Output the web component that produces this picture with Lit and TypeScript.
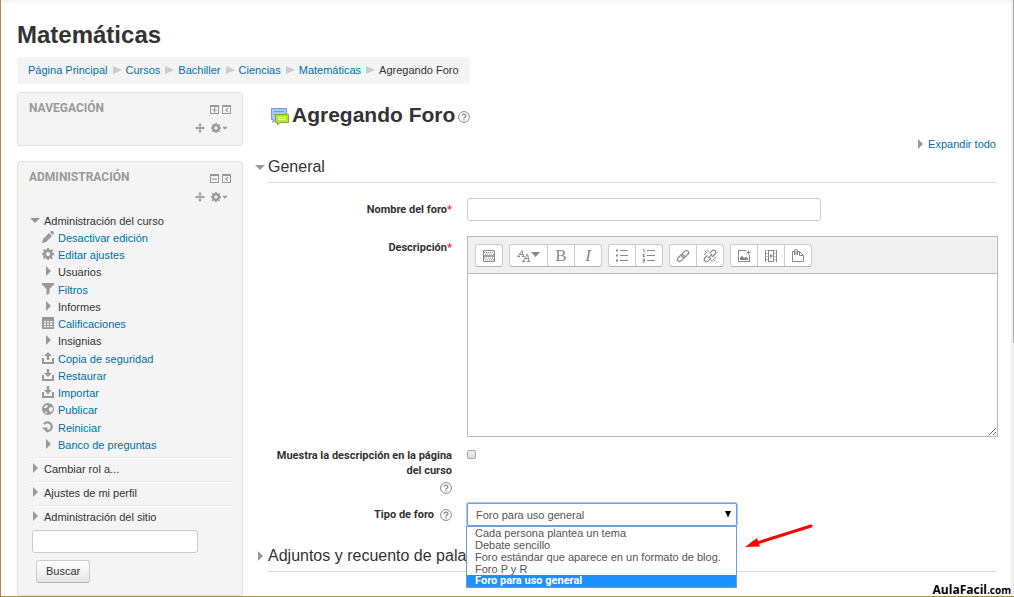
import { LitElement, html, css, svg } from "lit";
import { customElement, property, state } from "lit/decorators.js";

const ICONS: Record<string, unknown> = {
  expanded: svg`<path d="M1 4h10L6 9z"/>`,
  collapsed: svg`<path d="M4 1v10l5-5z"/>`,
  pencil: svg`<path d="M0 12l1-4 6-6 3 3-6 6zM8 1l1-1q1-.5 2 .5l.5.5q1 1 0 2l-1 1z"/>`,
  gear: svg`<path fill-rule="evenodd" d="M5 0h2l.4 1.7 1 .4L10 1.1 11.200 2.400 10 3.800l.4 1L12 5v2l-1.700.4-.4 1 1 1.500-1.300 1.300-1.500-1-1 .4L7 12H5l-.4-1.500-1-.4-1.500 1L.8 9.800l1-1.500-.4-1L0 7V5l1.500-.3.4-1L1 2.200 2.300.9l1.500 1 1-.4zM6 4a2 2 0 1 0 0 4 2 2 0 0 0 0-4z"/>`,
  filter: svg`<path d="M0 0h12v1.500L7.500 6v4.500L4.500 12V6L0 1.500z"/>`,
  grades: svg`<path fill-rule="evenodd" d="M0 0h12v12H0zM2 4v1.500h2V4zM5 4v1.500h2V4zM8 4v1.500h2.500V4zM2 6.500v1.500h2V6.500zM5 6.500v1.500h2V6.500zM8 6.500v1.500h2.500V6.500zM2 9v1.200h2V9zM5 9v1.200h2V9zM8 9v1.200h2.500V9z"/>`,
  upload: svg`<path d="M6 0l4 4H7.200v4H4.800V4H2zM0 6h2v4h8V6h2v6H0z"/>`,
  download: svg`<path d="M6 8L2 4h2.800V0h2.400v4H10zM0 6h2v4h8V6h2v6H0z"/>`,
  globe: svg`<path fill-rule="evenodd" d="M6 0a6 6 0 1 0 0 12A6 6 0 0 0 6 0zM1.500 5L4 2l2 .4-.5 1.500-1.500 1zM7.500 4.500l3-.5.5 2.500L9 9.500 8 8.500 6.500 6.500zM3 8l2 1v1.800L3.500 10z"/>`,
  reset: svg`<path d="M2 3.200A4.300 4.300 0 1 1 6 10H4" fill="none" stroke="currentColor" stroke-width="2.200"/><path d="M0 6.500h5.500V12z"/>`,
  move: svg`<path d="M6 0l2.200 2.800H6.800v2.400h2.400V3.800L12 6 9.200 8.200V6.800H6.800v2.400h1.400L6 12 3.800 9.200h1.400V6.800H2.800v1.400L0 6l2.800-2.200v1.400h2.400V2.800H3.800z"/>`,
  plus: svg`<path fill-rule="evenodd" d="M2 2h9v9H2zM3 4v6h7V4zM6 4.500h1.200v1.900H9v1.200H7.200V9.500H6V7.600H4V6.400h2z"/>`,
  minus: svg`<path fill-rule="evenodd" d="M2 2h9v9H2zM3 4v6h7V4zM4 6.500h5v1.200H4z"/>`,
  dock: svg`<path fill-rule="evenodd" d="M2 2h9v9H2zM3 4v6h7V4zM8 4.500V6L6.800 7 8 8v1.500L5 7z"/>`,
  help: svg`<circle cx="6" cy="6" r="5.400" fill="none" stroke="currentColor" stroke-width="1"/><path d="M4.100 4.700a1.900 1.600 0 1 1 2.700 1.400Q6 6.500 6 7.400" fill="none" stroke="currentColor" stroke-width="1.300"/><path d="M5.300 8.200h1.400v1.400H5.300z"/>`,
  caret: svg`<path d="M2 4h8L6 8.500z"/>`,
};

const icon = (name: string, size = 12) =>
  html`<svg width=${size} height=${size} viewBox="0 0 12 12" fill="currentColor" aria-hidden="true">${ICONS[name]}</svg>`;

const stroke = (body: unknown) =>
  html`<svg width="14" height="14" viewBox="0 0 14 14" fill="none" stroke="currentColor" aria-hidden="true">${body}</svg>`;

const TOOLBAR = [
  [{ label: "Mostrar más botones", art: stroke(svg`<path d="M1.500 1.500h11v11h-11z"/><path d="M1 7h12" stroke-width="1.500"/><path d="M2 3.500h10M3 5.200h10M2 9h10M3 10.800h10" stroke-dasharray="1 1"/>`) }],
  [
    { label: "Estilos", wide: true, art: html`<svg width="24" height="14" viewBox="0 0 24 14" fill="none" stroke="currentColor" aria-hidden="true"><path d="M1 7.500L5 1.500l1.500 6M2.500 5.500H6M.5 7.500H3M5 7.500h2.500M6 12l4.500-7 1.500 7M7.500 9.500H11.500M5 12.500h3M10 12.500h3"/><path d="M14 3h9l-4.500 5z" fill="currentColor" stroke="none"/></svg>` },
    { label: "Negrita", art: html`<b class="glyph">B</b>` },
    { label: "Cursiva", art: html`<i class="glyph">I</i>` },
  ],
  [
    { label: "Lista sin numerar", art: stroke(svg`<path d="M5 1.500h8M5 6.500h8M5 11.500h8"/><path d="M1 1.500h2M1 6.500h2M1 11.500h2" stroke-width="2"/>`) },
    { label: "Lista numerada", art: stroke(svg`<path d="M5 1.500h8M5 6.500h8M5 11.500h8"/><path d="M1 .5h1v3M.5 5.500h2l-1.500 2h2M.5 10h2v3h-2M1 11.500h1"/>`) },
  ],
  [
    { label: "Enlace", art: stroke(svg`<g transform="rotate(-45 7 7)" stroke-width="1.200"><rect x="0" y="4.800" width="8" height="4.400" rx="2.200"/><rect x="6" y="4.800" width="8" height="4.400" rx="2.200"/></g>`) },
    { label: "Quitar enlace", art: stroke(svg`<g transform="rotate(-45 7 7)" stroke-width="1.200"><path d="M5.500 4.800H2a2.200 2.200 0 0 0 0 4.400H5.500L6 7H4M8.500 4.800H12a2.200 2.200 0 0 1 0 4.400H8.500L8 7h2"/></g><path d="M2 2l2 2M5 1v2M1 5h2M12 12l-2-2M9 13v-2M13 9h-2"/>`) },
  ],
  [
    { label: "Imagen", art: stroke(svg`<path d="M1.500 1v11.500h11V6M1 1.500h8"/><path d="M3 11V9l2-2.500L7 9l2-1.500 2 2V11z" fill="currentColor" stroke="none"/><path d="M9.500 3.500h4M11.500 1.500v4"/>`) },
    { label: "Multimedia", art: stroke(svg`<path d="M1.500 1v12M4.500 1v12M9.500 1v12M12.500 1v12M4 1.500h6M4 12.500h6"/><path d="M3 1v12M11 1v12" stroke-dasharray="1 2"/><path d="M6 5l3 2-3 2z" fill="currentColor" stroke="none"/>`) },
    { label: "Archivos", art: stroke(svg`<path d="M3 2.500H1.500v10h11v-6l-4-4H7M8.500 2.500v4h4"/><path d="M3.500 6V2a1.500 1.500 0 0 1 3 0V6M5 2v4"/>`) },
  ],
];

const COURSE_ADMIN = [
  { icon: "pencil", text: "Desactivar edición" },
  { icon: "gear", text: "Editar ajustes" },
  { icon: "collapsed", text: "Usuarios", branch: true },
  { icon: "filter", text: "Filtros" },
  { icon: "collapsed", text: "Informes", branch: true },
  { icon: "grades", text: "Calificaciones" },
  { icon: "collapsed", text: "Insignias", branch: true },
  { icon: "upload", text: "Copia de seguridad" },
  { icon: "download", text: "Restaurar" },
  { icon: "download", text: "Importar" },
  { icon: "globe", text: "Publicar" },
  { icon: "reset", text: "Reiniciar" },
  { icon: "collapsed", text: "Banco de preguntas" },
];

const BRANCHES = ["Cambiar rol a...", "Ajustes de mi perfil", "Administración del sitio"];

const base = css`
  * { box-sizing: border-box; }
  a { color: #0070a8; text-decoration: none; }
  ul, ol { list-style: none; margin: 0; padding: 0; }
  svg { display: block; flex: none; }
  button { font: inherit; color: inherit; cursor: pointer; }
  .plain { border: 0; background: none; padding: 0; display: inline-flex; align-items: center; }
`;

@customElement("side-block")
class SideBlock extends LitElement {
  @property() heading = "";
  @property({ type: Boolean }) open = false;

  static styles = [base, css`
    :host { display: block; background: #f4f4f4; border: 1px solid #e2e2e2; border-radius: 3px; padding: 7px 10px 12px 11px; }
    .head { display: flex; justify-content: space-between; align-items: flex-start; }
    h2 { margin: 0; font-family: Roboto, "Liberation Sans", sans-serif; font-size: 12px; line-height: 16px; color: #999; text-transform: uppercase; }
    .tools { color: #999; display: grid; justify-items: end; row-gap: 8px; padding-top: 3px; }
    .pair { display: flex; }
    .edit { display: flex; gap: 6px; padding-right: 3px; }
  `];

  render() {
    return html`
      <div class="head">
        <h2>${this.heading}</h2>
        <div class="tools">
          <div class="pair">
            <button class="plain" aria-label="Mostrar u ocultar">${icon(this.open ? "minus" : "plus")}</button>
            <button class="plain" aria-label="Minimizar">${icon("dock")}</button>
          </div>
          <div class="edit">
            <button class="plain" aria-label="Mover">${icon("move", 10)}</button>
            <button class="plain" aria-label="Acciones">${icon("gear", 10)}${icon("caret", 8)}</button>
          </div>
        </div>
      </div>
      <slot></slot>`;
  }
}

@customElement("admin-tree")
class AdminTree extends LitElement {
  static styles = [base, css`
    :host { display: block; padding-top: 11px; line-height: 17px; }
    .node { display: flex; align-items: center; gap: 4px; color: #333; }
    .node svg { color: #999; margin-bottom: 3px; }
    .root { gap: 3px; }
    .children { padding-left: 13px; }
    .children .node:nth-child(4n) { padding-top: 1px; }
    .branch { border-top: 1px solid #fff; box-shadow: 0 -1px #e8e8e8; padding: 2px 0 4px; }
    .branches { margin-top: 4px; }
    form { display: grid; justify-items: start; gap: 7px; padding: 0 3px; }
    input { width: 166px; height: 23px; border: 1px solid #ccc; border-radius: 3px; font: inherit; background: #fff; }
    .submit { margin-left: 4px; height: 23px; padding: 0 9px; border: 1px solid #ccc; border-bottom-color: #b3b3b3; border-radius: 3px; background: linear-gradient(#fff, #e6e6e6); color: #333; }
  `];

  render() {
    return html`
      <div class="node root">${icon("expanded")}<span>Administración del curso</span></div>
      <ul class="children">
        ${COURSE_ADMIN.map((item) => html`<li class="node">${icon(item.icon)}${item.branch ? html`<span>${item.text}</span>` : html`<a href="#">${item.text}</a>`}</li>`)}
      </ul>
      <ul class="branches">
        ${BRANCHES.map((text) => html`<li class="branch"><div class="node root">${icon("collapsed")}<span>${text}</span></div></li>`)}
      </ul>
      <form @submit=${(e: Event) => e.preventDefault()}>
        <input type="text" aria-label="Buscar en ajustes" />
        <button class="submit">Buscar</button>
      </form>`;
  }
}

@customElement("rich-editor")
class RichEditor extends LitElement {
  static styles = [base, css`
    :host { display: block; border: 1px solid #bbb; background: #fff; }
    .toolbar { display: flex; flex-wrap: wrap; gap: 6px; padding: 7px 7px 6px; background: #f0f0f0; border-bottom: 1px solid #bbb; }
    .group { display: flex; border: 1px solid #ccc; border-bottom-color: #b3b3b3; border-radius: 3px; background: #fff; overflow: hidden; }
    .tool { width: 26px; height: 21px; padding: 0; border: 0; background: none; color: #888; display: grid; place-items: center; }
    .tool + .tool { border-left: 1px solid #ccc; width: 27px; }
    .wide { width: 37px; }
    .glyph { font-family: "Liberation Serif", serif; font-size: 17px; line-height: 20px; font-weight: 400; }
    textarea { display: block; width: 100%; height: 162px; border: 0; padding: 4px; resize: vertical; outline: 0; font: inherit; }
  `];

  render() {
    return html`
      <div class="toolbar" role="toolbar">
        ${TOOLBAR.map((group) => html`<div class="group">${group.map((tool: any) => html`<button class="tool ${tool.wide ? "wide" : ""}" aria-label=${tool.label}>${tool.art}</button>`)}</div>`)}
      </div>
      <textarea aria-label="Descripción"></textarea>`;
  }
}

@customElement("app-root")
class AppRoot extends LitElement {
  @state() private selected = 4;
  private kinds = [
    "Cada persona plantea un tema",
    "Debate sencillo",
    "Foro estándar que aparece en un formato de blog.",
    "Foro P y R",
    "Foro para uso general",
  ];

  static styles = [base, css`
    :host { display: block; position: relative; height: 100vh; overflow: hidden; background: #fff; color: #333; font: 11px/18px "Liberation Sans", Arial, sans-serif; }
    .page { height: 100%; overflow: hidden; border-left: 1px solid #b08d45; border-bottom: 1px solid #b08d45; padding: 20px 16px; background: linear-gradient(#f4f4f4, #fff 5px); }
    h1 { margin: 0; font-size: 24px; line-height: 30px; }
    .crumbs { display: inline-flex; align-items: center; margin-top: 7px; padding: 4px 11px 5px; background: #f4f4f4; border-radius: 3px; }
    .crumb { display: flex; align-items: center; }
    .crumb svg { margin: 0 4px 0 5px; color: #ccc; }
    .columns { display: grid; grid-template-columns: 226px minmax(0, 1fr); column-gap: 13px; margin-top: 8px; }
    .side { display: grid; row-gap: 15px; align-content: start; }
    main { padding-top: 7px; }
    .title { display: flex; align-items: center; margin: 0; padding-left: 14px; font-size: 21px; line-height: 32px; }
    .title .forum { margin: 2px 3px 0 0; }
    .help { color: #888; }
    .title .help { margin: 4px 0 0 3px; }
    .expand { display: flex; justify-content: flex-end; align-items: center; gap: 2px; margin-top: 4px; padding-right: 2px; color: #999; }
    fieldset { border: 0; margin: 0; padding: 0; min-width: 0; }
    .legend { display: flex; align-items: center; font-size: 16px; line-height: 28px; }
    .legend svg { color: #999; margin: 0 2px 0 -2px; }
    .heading { margin: 0; font-size: inherit; font-weight: 400; }
    .rule { border: 0; border-top: 1px solid #ddd; margin: 1px 2px 0 12px; }
    .rows { padding: 15px 0 16px 12px; display: grid; row-gap: 15px; }
    .checks { display: grid; row-gap: 5px; margin-top: -4px; }
    .row { display: grid; grid-template-columns: 184px minmax(0, 1fr); column-gap: 15px; }
    .label { font-family: Roboto, "Liberation Sans", sans-serif; font-weight: 700; text-align: right; line-height: 15px; }
    .center { align-self: center; }
    .top { padding-top: 4px; }
    .req { color: #f22; }
    .label .help { margin: 4px 0 1px; }
    .kind { display: flex; justify-content: flex-end; align-items: center; gap: 6px; }
    .kind .help { margin: 0; }
    .name { width: 354px; max-width: 100%; height: 23px; border: 1px solid #ccc; border-radius: 3px; font: inherit; padding: 0 6px; }
    .check { appearance: none; margin: 2px 0 0; width: 9px; height: 9px; border: 1px solid #aaa; border-radius: 2px; background: linear-gradient(#eee, #ddd); }
    .picker { position: relative; width: 270px; }
    select { display: block; appearance: none; width: 100%; height: 23px; border: 1px solid #6f9fe8; border-radius: 2px; box-shadow: 0 0 0 1px #a9c7f3; padding: 0 8px; font: inherit; color: #555; background: #fff; }
    .drop { position: absolute; right: 5px; top: 7px; color: #000; pointer-events: none; }
    .list { position: absolute; z-index: 2; top: 100%; left: -1px; width: 271px; border: 1px solid #6f9cc4; background: #fff; color: #555; line-height: 12px; }
    .option { padding: 0 8px; white-space: nowrap; }
    .chosen { background: #1e90ff; color: #fff; font-family: Roboto, "Liberation Sans", sans-serif; font-weight: 700; }
    .pointer { position: absolute; left: 278px; top: 20px; }
    .mark { position: absolute; right: 3px; bottom: 0; color: #000; font: 700 12px/14px "Open Sans", "Noto Sans", sans-serif; }
    .tld { font-size: 10px; }
    .rail { position: absolute; top: 0; right: 0; bottom: 1px; width: 3px; background: #f0f0f0; }
    .thumb { height: 57.5%; margin-left: 2px; background: #aaa; }
  `];

  render() {
    const crumbs = ["Página Principal", "Cursos", "Bachiller", "Ciencias", "Matemáticas"];
    return html`
      <div class="page">
        <h1>Matemáticas</h1>
        <nav class="crumbs">
          ${crumbs.map((text) => html`<span class="crumb"><a href="#">${text}</a><svg width="9" height="9" viewBox="0 0 9 9" fill="currentColor"><path d="M0 0v8l9-4z"/></svg></span>`)}
          <span>Agregando Foro</span>
        </nav>
        <div class="columns">
          <aside class="side">
            <side-block heading="Navegación"></side-block>
            <side-block heading="Administración" open><admin-tree></admin-tree></side-block>
          </aside>
          <main>
            <h2 class="title">
              <svg class="forum" width="19" height="19" viewBox="0 0 19 19">
                <path d="M1.500 1.500h15v11H6l-3 3v-3H1.500z" fill="#a9c9f5" stroke="#6f9be0"/>
                <path d="M4 4.500h10M4 7.500h5" stroke="#6f9be0"/>
                <path d="M5.500 7.500h13v8H10l-2.500 2.500v-2.500h-2z" fill="#b5e04a" stroke="#7db31a"/>
                <path d="M8 10.500h8M8 12.500h8" stroke="#f0ffc8"/>
              </svg>
              Agregando Foro
              <button class="plain help" aria-label="Ayuda">${icon("help")}</button>
            </h2>
            <div class="expand">${icon("collapsed")}<a href="#">Expandir todo</a></div>
            <fieldset>
              <div class="legend">${icon("expanded")}<h3 class="heading">General</h3></div>
              <hr class="rule" />
              <div class="rows">
                <div class="row">
                  <label class="label center" for="name">Nombre del foro<span class="req">*</span></label>
                  <input class="name" id="name" type="text" />
                </div>
                <div class="row">
                  <div class="label top">Descripción<span class="req">*</span></div>
                  <rich-editor></rich-editor>
                </div>
                <div class="checks">
                  <div class="row">
                    <div class="label">
                      <label for="show">Muestra la descripción en la página del curso</label>
                      <div><button class="plain help" aria-label="Ayuda">${icon("help")}</button></div>
                    </div>
                    <input class="check" id="show" type="checkbox" />
                  </div>
                  <div class="row">
                    <div class="label kind">
                      <label for="kind">Tipo de foro</label>
                      <button class="plain help" aria-label="Ayuda">${icon("help")}</button>
                    </div>
                    <div class="picker">
                      <select id="kind">
                        ${this.kinds.map((text, i) => html`<option ?selected=${i === this.selected}>${text}</option>`)}
                      </select>
                      <svg class="drop" width="8" height="8" viewBox="0 0 8 8" fill="currentColor"><path d="M1 1h6L4 7.500z"/></svg>
                      <ul class="list" role="listbox">
                        ${this.kinds.map((text, i) => html`<li role="option" class="option ${i === this.selected ? "chosen" : ""}" aria-selected=${i === this.selected ? "true" : "false"} @click=${() => (this.selected = i)}>${text}</li>`)}
                      </ul>
                      <svg class="pointer" width="68" height="26" viewBox="0 0 68 26" aria-hidden="true">
                        <path d="M66 3L12 20" stroke="#f00" stroke-width="3" stroke-linecap="round"/>
                        <path d="M0 24l12-9 3 8.500z" fill="#f00"/>
                      </svg>
                    </div>
                  </div>
                </div>
              </div>
            </fieldset>
            <fieldset>
              <div class="legend">${icon("collapsed")}<h3 class="heading">Adjuntos y recuento de palabras</h3></div>
              <hr class="rule" />
            </fieldset>
          </main>
        </div>
      </div>
      <div class="rail"><div class="thumb"></div></div>
      <div class="mark">AulaFacil<span class="tld">.com</span></div>`;
  }
}
